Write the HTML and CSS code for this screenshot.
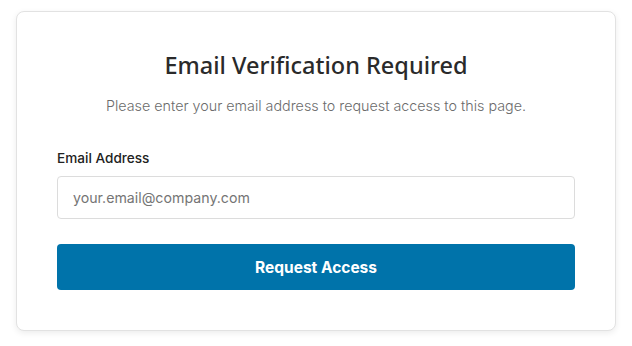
FILE: index.html
```html
<!DOCTYPE html>
<html>
<head>
<meta charset="utf-8">
<link rel="stylesheet" href="styles.css">
</head>
<body>
<div class="card">
  <h1 class="title">Email Verification Required</h1>
  <p class="subtitle">Please enter your email address to request access to this page.</p>
  <form class="form">
    <label class="label" for="email">Email Address</label>
    <input class="input" id="email" type="email" placeholder="your.email@company.com">
    <button class="button" type="button">Request Access</button>
  </form>
</div>
</body>
</html>
```

FILE: styles.css
```css
html, body {
  margin: 0;
  padding: 0;
  background: #ffffff;
}
body {
  padding: 11px 16px;
  font-family: Inter, "Noto Sans", sans-serif;
}
.card {
  box-sizing: border-box;
  width: 600px;
  border: 1px solid #e2e2e2;
  border-radius: 8px;
  box-shadow: 0 2px 6px rgba(0,0,0,0.08);
  padding: 37px 40px 40px;
  background: #fff;
}
.title {
  margin: 0;
  text-align: center;
  font-family: "Noto Sans", "Open Sans", sans-serif;
  font-weight: 500;
  font-size: 23.5px;
  line-height: 32px;
  color: #2a2a2a;
}
.subtitle {
  margin: 14px 0 0;
  text-align: center;
  font-family: Inter, sans-serif;
  font-weight: 300;
  font-size: 14.3px;
  line-height: 22px;
  color: #6b6b6b;
}
.form {
  display: flex;
  flex-direction: column;
  margin-top: 31px;
}
.label {
  font-size: 13.6px;
  font-weight: 500;
  line-height: 20px;
  color: #222;
}
.input {
  box-sizing: border-box;
  margin-top: 8px;
  height: 43px;
  border: 1px solid #dcdcdc;
  border-radius: 4px;
  padding: 0 15px;
  font-family: Inter, sans-serif;
  font-size: 14.2px;
  color: #333;
}
.input::placeholder {
  color: #757575;
}
.button {
  margin-top: 25px;
  height: 46px;
  border: none;
  border-radius: 4px;
  background: #0073aa;
  color: #fff;
  font-family: Inter, sans-serif;
  font-weight: 700;
  font-size: 15.5px;
}
```
